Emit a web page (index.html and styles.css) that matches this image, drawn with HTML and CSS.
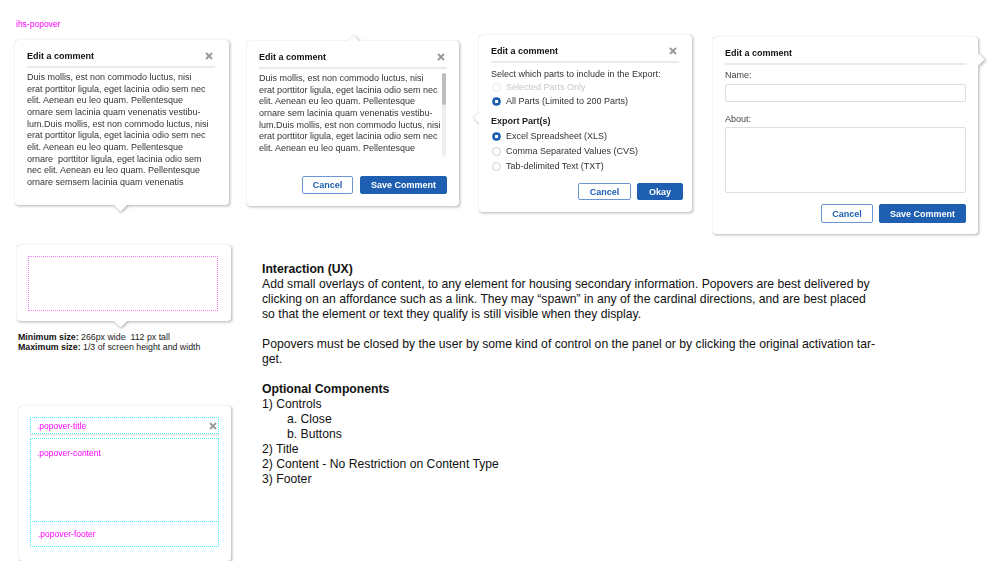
FILE: index.html
```html
<!DOCTYPE html>
<html lang="en">
<head>
<meta charset="utf-8">
<title>ihs-popover</title>
<link rel="stylesheet" href="styles.css">
</head>
<body>
<div class="page">
  <div class="doc-label">ihs-popover</div>

  <div class="top-row">
    <div class="popover pop-1">
      <div class="pop-title"><span>Edit a comment</span><svg class="close" width="8" height="8" viewBox="0 0 8 8"><path d="M1 1L7 7M7 1L1 7"/></svg></div>
      <div class="pop-text">Duis mollis, est non commodo luctus, nisi<br>erat porttitor ligula, eget lacinia odio sem nec<br>elit. Aenean eu leo quam. Pellentesque<br>ornare sem lacinia quam venenatis vestibu-<br>lum.Duis mollis, est non commodo luctus, nisi<br>erat porttitor ligula, eget lacinia odio sem nec<br>elit. Aenean eu leo quam. Pellentesque<br>ornare &nbsp;porttitor ligula, eget lacinia odio sem<br>nec elit. Aenean eu leo quam. Pellentesque<br>ornare semsem lacinia quam venenatis</div>
    </div>

    <div class="popover pop-2">
      <div class="pop-title"><span>Edit a comment</span><svg class="close" width="8" height="8" viewBox="0 0 8 8"><path d="M1 1L7 7M7 1L1 7"/></svg></div>
      <div class="scroll-wrap">
        <div class="pop-text">Duis mollis, est non commodo luctus, nisi<br>erat porttitor ligula, eget lacinia odio sem nec<br>elit. Aenean eu leo quam. Pellentesque<br>ornare sem lacinia quam venenatis vestibu-<br>lum.Duis mollis, est non commodo luctus, nisi<br>erat porttitor ligula, eget lacinia odio sem nec<br>elit. Aenean eu leo quam. Pellentesque</div>
        <div class="scrollbar"><div class="thumb"></div></div>
      </div>
      <div class="pop-footer footer-2">
        <button class="btn btn-secondary">Cancel</button>
        <button class="btn btn-primary">Save Comment</button>
      </div>
    </div>

    <div class="popover pop-3">
      <div class="pop-title"><span>Edit a comment</span><svg class="close" width="8" height="8" viewBox="0 0 8 8"><path d="M1 1L7 7M7 1L1 7"/></svg></div>
      <div class="export-body">
        <div class="export-intro">Select which parts to include in the Export:</div>
        <div class="radio-row short disabled"><span class="radio"></span>Selected Parts Only</div>
        <div class="radio-row short"><span class="radio checked"></span>All Parts (Limited to 200 Parts)</div>
        <div class="export-heading">Export Part(s)</div>
        <div class="radio-row"><span class="radio checked"></span>Excel Spreadsheet (XLS)</div>
        <div class="radio-row"><span class="radio"></span>Comma Separated Values (CVS)</div>
        <div class="radio-row"><span class="radio"></span>Tab-delimited Text (TXT)</div>
      </div>
      <div class="pop-footer footer-3">
        <button class="btn btn-secondary btn-cancel-3">Cancel</button>
        <button class="btn btn-primary btn-okay">Okay</button>
      </div>
    </div>

    <div class="popover pop-4">
      <div class="pop-title"><span>Edit a comment</span></div>
      <label class="field-label name-label">Name:</label>
      <input class="field-input" type="text">
      <label class="field-label about-label">About:</label>
      <textarea class="field-area"></textarea>
      <div class="pop-footer footer-4">
        <button class="btn btn-secondary">Cancel</button>
        <button class="btn btn-primary">Save Comment</button>
      </div>
    </div>
  </div>

  <div class="lower">
    <div class="left-col">
      <div class="popover pop-size">
        <div class="size-frame"></div>
      </div>
      <div class="size-caption">
        <div><b>Minimum size:</b> 266px wide &nbsp;112 px tall</div>
        <div><b>Maximum size:</b> 1/3 of screen height and width</div>
      </div>
      <div class="popover pop-anatomy">
        <div class="anat-title"><span class="anat-label">.popover-title</span><svg class="close" width="8" height="8" viewBox="0 0 8 8"><path d="M1 1L7 7M7 1L1 7"/></svg></div>
        <div class="anat-content"><span class="anat-label">.popover-content</span></div>
        <div class="anat-footer"><span class="anat-label">.popover-footer</span></div>
      </div>
    </div>

    <div class="notes">
      <p><b>Interaction (UX)</b><br>Add small overlays of content, to any element for housing secondary information. Popovers are best delivered by<br>clicking on an affordance such as a link. They may “spawn” in any of the cardinal directions, and are best placed<br>so that the element or text they qualify is still visible when they display.</p>
      <p>Popovers must be closed by the user by some kind of control on the panel or by clicking the original activation tar-<br>get.</p>
      <p><b>Optional Components</b><br>1) Controls<br><span class="indent">a. Close</span><br><span class="indent">b. Buttons</span><br>2) Title<br>2) Content - No Restriction on Content Type<br>3) Footer</p>
    </div>
  </div>
</div>
</body>
</html>
```

FILE: styles.css
```css
* { box-sizing: border-box; }

body {
  margin: 0;
  background: #fff;
  font-family: "Liberation Sans", Arial, sans-serif;
  color: #333;
}

.page {
  width: 1002px;
}

.doc-label {
  margin: 19px 0 0 16px;
  font-size: 8.5px;
  line-height: 10px;
  color: #f0f;
}

/* ---------- top row ---------- */
.top-row {
  display: flex;
  align-items: flex-start;
  margin-top: 6px;
}

.popover {
  position: relative;
  background: #fff;
  border-radius: 3px;
  padding: 0 12px;
  filter: drop-shadow(0 0 0.6px rgba(0,0,0,0.35)) drop-shadow(1px 1.5px 1.5px rgba(0,0,0,0.3));
}

.popover::after {
  content: "";
  position: absolute;
  width: 9px;
  height: 9px;
  background: #fff;
  transform: rotate(45deg);
}

.pop-1 { width: 214px; height: 165px; margin: 5px 0 0 15px; padding-right: 14px; }
.pop-1::after { left: 101px; bottom: -4.5px; }

.pop-2 { width: 212px; height: 165px; margin: 6px 0 0 18px; }
.pop-2::after { left: 101.5px; top: -4.5px; }

.pop-3 { width: 213px; height: 177px; margin: 0 0 0 20px; padding-right: 13px; }
.pop-3::after { left: -4.5px; top: 77.5px; }

.pop-4 { width: 265px; height: 197px; margin: 2px 0 0 21px; }
.pop-4::after { right: -4.5px; top: 17.5px; }

.pop-title {
  display: flex;
  justify-content: space-between;
  align-items: center;
  padding-top: 7px;
  height: 28px;
  line-height: 18px;
  font-size: 9px;
  font-weight: bold;
  color: #111;
  border-bottom: 2px solid #ebebeb;
  padding-bottom: 1px;
}

.close {
  display: block;
  margin-right: 2px;
}
.close path {
  stroke: #999;
  stroke-width: 1.9;
  fill: none;
}

.pop-text {
  margin-top: 4px;
  font-size: 9px;
  line-height: 11.67px;
  color: #333;
  white-space: nowrap;
}

.scroll-wrap {
  display: flex;
  height: 84px;
  margin-top: 4px;
}
.scroll-wrap .pop-text {
  margin-top: 0;
  flex: 1;
  overflow: hidden;
}
.scrollbar {
  width: 4px;
  margin-right: 1px;
  background: #efefef;
  border-radius: 2px;
}
.thumb {
  height: 32px;
  background: #bdbdbd;
  border-radius: 2px;
}

.pop-footer {
  display: flex;
  justify-content: flex-end;
  gap: 7px;
}
.footer-2 { margin-top: 19px; }
.footer-3 { margin-top: 9.5px; margin-right: -4px; gap: 6px; }
.footer-4 { margin-top: 11px; gap: 6px; }

.btn {
  height: 18px;
  padding: 0;
  font-family: inherit;
  font-size: 9px;
  font-weight: bold;
  border-radius: 2px;
  cursor: pointer;
}
.btn-secondary {
  width: 51px;
  background: #fff;
  color: #1e5eb0;
  border: 1px solid #6d95d1;
}
.btn-primary {
  width: 87px;
  background: #1f5fb1;
  color: #fff;
  border: 1px solid #1f5fb1;
}
.pop-3 .btn { height: 17px; }
.btn-cancel-3 { width: 53px; }
.btn-okay { width: 46px; }
.pop-4 .btn { height: 19px; }
.pop-4 .btn-secondary { width: 52px; }

/* export popover */
.export-body {
  margin-top: 5px;
  font-size: 9px;
  color: #333;
}
.export-intro { line-height: 12px; }
.radio-row {
  display: flex;
  align-items: center;
  height: 15px;
  padding-left: 1px;
}
.radio-row.short { height: 14px; }
.radio-row.disabled { color: #c8c8c8; }
.export-heading {
  margin-top: 6px;
  height: 14.5px;
  line-height: 14px;
  font-weight: bold;
  color: #222;
}
.radio {
  width: 9px;
  height: 9px;
  margin-right: 5px;
  border-radius: 50%;
  border: 1px solid #cfcfcf;
  background: #fff;
  flex: none;
}
.disabled .radio { border-color: #e6e6e6; }
.radio.checked {
  border-color: #1f5fb1;
  background: radial-gradient(circle, #fff 0 1.5px, #1f5fb1 2px);
}

/* form popover */
.field-label {
  display: block;
  font-size: 9px;
  line-height: 12px;
  color: #444;
}
.name-label { margin-top: 4px; }
.about-label { margin-top: 11px; }
.field-input,
.field-area {
  display: block;
  width: 100%;
  border: 1px solid #dedede;
  border-radius: 2px;
  background: #fff;
  font-family: inherit;
  font-size: 9px;
  margin: 0;
  padding: 2px 4px;
  outline: none;
}
.field-input { height: 18px; margin-top: 3px; }
.field-area { height: 66px; margin-top: 2px; resize: none; }

/* ---------- lower section ---------- */
.lower {
  display: grid;
  grid-template-columns: 246px 1fr;
}

.left-col {
  padding: 11px 0 0 17px;
}

.pop-size {
  width: 214px;
  height: 76px;
  padding: 11px 13px 10px 11px;
}
.pop-size::after { left: 98.5px; bottom: -4.5px; }

.size-frame {
  height: 100%;
  border: 1px dotted #f27df2;
}

.size-caption {
  margin: 11px 0 0 1px;
  font-size: 8.8px;
  line-height: 10px;
  color: #222;
}
.size-caption b { color: #111; }

.pop-anatomy {
  width: 212px;
  height: 155px;
  margin: 54px 0 0 2px;
  padding: 11px 12px 14px 11px;
}
.pop-anatomy::after { left: 96.5px; bottom: -4.5px; }

.anat-label {
  color: #f0f;
}
.anat-title,
.anat-content,
.anat-footer {
  font-size: 8.5px;
  line-height: 10px;
}
.anat-title {
  display: flex;
  justify-content: space-between;
  align-items: flex-start;
  height: 17px;
  padding: 3px 0 0 6px;
  border: 1px dotted #49f2f2;
  box-shadow: 0 2px 0 #ececec;
}
.anat-title .close { margin: 1px 1px 0 0; }
.anat-content {
  height: 84px;
  margin-top: 4px;
  padding: 9px 0 0 6px;
  border: 1px dotted #49f2f2;
}
.anat-footer {
  height: 25px;
  padding: 7px 0 0 7px;
  border: 1px dotted #49f2f2;
  border-top: none;
}

.notes {
  padding: 28px 0 0 16px;
  font-size: 12.2px;
  line-height: 15px;
  color: #111;
  white-space: nowrap;
}
.notes p { margin: 0 0 15px; }
.indent { padding-left: 25px; }
```
